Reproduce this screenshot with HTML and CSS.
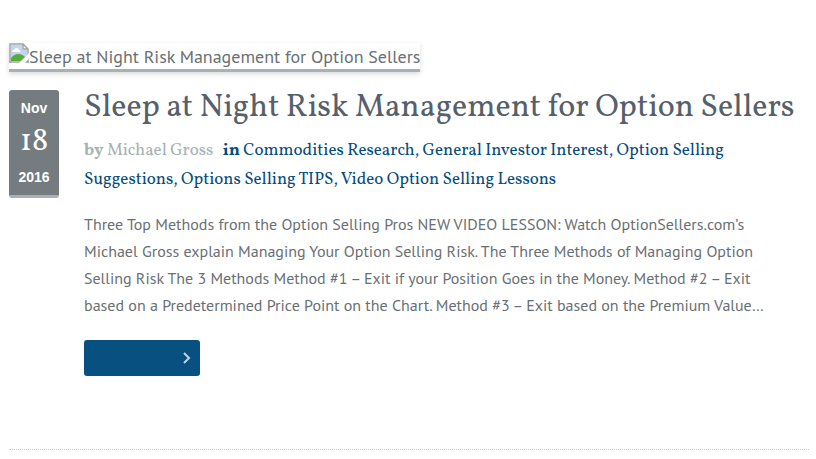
FILE: index.html
```html
<!DOCTYPE html>
<html lang="en">
<head>
<meta charset="utf-8" />
<meta name="viewport" content="width=device-width, initial-scale=1" />
<title>Sleep at Night Risk Management for Option Sellers</title>
	<link rel="stylesheet" href="styles.css">
</head>

<body>
	<article class="post">
		<a class="post-thumb" href="#">
			<svg class="thumb-icon" width="20" height="20" viewBox="0 0 20 20" aria-hidden="true">
				<path d="M0 0h14l6 6v14H0z" fill="#fff"/>
				<path d="M2 2h11v5h5v11H2z" fill="#c3d3f3"/>
				<path d="M3 9c0-2 2-2 2-2 1-3 5-2 5 0 2 0 2 2 1 2z" fill="#fff"/>
				<path d="M2 18v-3c4-5 10-5 14-1v4z" fill="#56ad3a"/>
				<path d="M1 20V1h13l5 5v14M0 19h20M14 1v5h5" fill="none" stroke="#a3a3a3" stroke-width="1.5"/>
				<path d="M10 20l10-10v5l-4 5z" fill="#fff"/>
			</svg><span>Sleep at Night Risk Management for Option Sellers</span>
		</a>
		<div class="post-main">
			<time class="post-date" datetime="2016-11-18">
				<span>Nov</span>
				<span class="day">18</span>
				<span>2016</span>
			</time>
			<div class="post-body">
				<h2 class="post-title"><a href="#">Sleep at Night Risk Management for Option Sellers</a></h2>
				<p class="post-meta">
					<span class="author"><b>by</b> <a href="#">Michael Gross</a></span>
					<b>in</b> <a href="#">Commodities Research</a>, <a href="#">General Investor Interest</a>, <a href="#">Option Selling Suggestions</a>, <a href="#">Options Selling TIPS</a>, <a href="#">Video Option Selling Lessons</a>
				</p>
				<p class="post-excerpt">Three Top Methods from the Option Selling Pros NEW VIDEO LESSON: Watch OptionSellers.com’s Michael Gross explain Managing Your Option Selling Risk. The Three Methods of Managing Option Selling Risk The 3 Methods Method #1 – Exit if your Position Goes in the Money. Method #2 – Exit based on a Predetermined Price Point on the Chart. Method #3 – Exit based on the Premium Value…</p>
				<a class="more" href="#" aria-label="Read more">
					<svg width="8" height="12" viewBox="0 0 8 12" aria-hidden="true">
						<path d="M1 1l5 5-5 5" fill="none" stroke="#c5d5e0" stroke-width="2"/>
					</svg>
				</a>
			</div>
		</div>
	</article>
</body>
</html>
```

FILE: styles.css
```css
body {
	margin: 0;
	background: #fff;
	color: #696f74;
	font: 16px/27px "PT Sans", "Noto Sans", sans-serif;
}
a {
	color: inherit;
	text-decoration: none;
}
.post {
	margin: 0 7px 0 9px;
	padding: 43px 0 73px;
	border-bottom: 1px dotted #c5d0d2;
}

/* thumbnail */
.post-thumb {
	display: flex;
	width: fit-content;
	height: 26px;
	border-bottom: 3px solid #a7b1b4;
	box-shadow: 0 2px 5px rgba(0, 0, 0, 0.15);
	font-size: 18px;
	white-space: nowrap;
}
.thumb-icon {
	flex: none;
}

.post-main {
	display: flex;
	gap: 25px;
	margin-top: 18px;
}

/* date badge */
.post-date {
	display: flex;
	flex: none;
	flex-direction: column;
	align-self: flex-start;
	box-sizing: border-box;
	width: 50px;
	padding: 8px 0;
	border-bottom: 3px solid #a7b1b4;
	border-radius: 3px;
	background: #747c7f;
	color: #fff;
	font: bold 14px/20px "Liberation Sans", Arial, sans-serif;
	text-align: center;
}
.post-date .day {
	font: 32px/49px Vollkorn, "Liberation Serif", serif;
}

.post-body {
	flex: 1;
	min-width: 0;
}
.post-title {
	margin: 0;
	color: #56606a;
	font: 32px/36px Vollkorn, "Liberation Serif", serif;
}
.post-meta {
	margin: 10px 0 17px;
	color: #064c7e;
	font: 17px/29px Vollkorn, "Liberation Serif", serif;
}
.author {
	margin-right: 6px;
	color: #a7b1b4;
}
.post-excerpt {
	margin: 0 0 21px;
	padding-right: 20px;
}

.more {
	display: flex;
	align-items: center;
	justify-content: flex-end;
	box-sizing: border-box;
	width: 116px;
	height: 36px;
	padding-right: 9px;
	border-radius: 3px;
	background: #07507f;
}
```
